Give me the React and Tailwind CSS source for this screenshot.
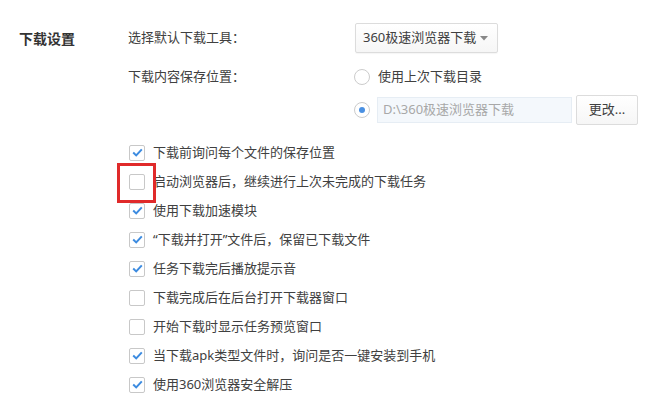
import React from "react";

const items = [
  { t: "下载前询问每个文件的保存位置", c: true },
  { t: "启动浏览器后，继续进行上次未完成的下载任务", c: false, mark: true },
  { t: "使用下载加速模块", c: true },
  { t: "“下载并打开”文件后，保留已下载文件", c: true },
  { t: "任务下载完后播放提示音", c: true },
  { t: "下载完成后在后台打开下载器窗口", c: false },
  { t: "开始下载时显示任务预览窗口", c: false },
  { t: "当下载apk类型文件时，询问是否一键安装到手机", c: true },
  { t: "使用360浏览器安全解压", c: true },
];

function Check({ checked, mark }) {
  return (
    <div className="relative w-[16px] h-[16px] shrink-0">
      <div className="w-[16px] h-[16px] rounded-[2px] border border-[#c8c8c8] bg-white flex items-center justify-center">
        {checked && (
          <svg width="11" height="9" viewBox="0 0 11 9">
            <path d="M1.2 4.6 L4.2 7.4 L9.8 1.4" fill="none" stroke="#3c8be0" strokeWidth="2" />
          </svg>
        )}
      </div>
      {mark && (
        <div className="absolute left-[-12px] top-[-11px] w-[39px] h-[40px] border-[3px] border-[#e02a2a] z-10" />
      )}
    </div>
  );
}

function Radio({ on }) {
  return (
    <div className="w-[16px] h-[16px] rounded-full border border-[#cccccc] bg-white flex items-center justify-center shrink-0">
      {on && <div className="w-[6px] h-[6px] rounded-full bg-[#4a90e2]" />}
    </div>
  );
}

export default function App() {
  return (
    <div
      className="w-[651px] h-[416px] bg-white text-[13px] text-[#404040] overflow-hidden"
      style={{ fontFamily: '"Noto Sans", "Noto Sans CJK SC", sans-serif' }}
    >
      <div className="flex pl-[19px] pt-[23px]">
        <div className="w-[109px] shrink-0 h-[30px] flex items-center text-[14px] font-bold text-[#333]">
          下载设置
        </div>
        <div className="flex flex-col">
          <div className="flex items-center h-[30px]">
            <div className="w-[227px]">选择默认下载工具：</div>
            <div className="w-[143px] h-[30px] border border-[#dcdcdc] rounded-[2px] bg-gradient-to-b from-white to-[#f6f6f6] flex items-center pl-[7px] pr-[9px] justify-between shadow-[0_1px_1px_rgba(0,0,0,0.04)]">
              <span>360极速浏览器下载</span>
              <svg width="8" height="5" viewBox="0 0 8 5">
                <path d="M0 0 H8 L4 4.5 Z" fill="#888" />
              </svg>
            </div>
          </div>
          <div className="flex items-center h-[30px] mt-[9px]">
            <div className="w-[226px]">下载内容保存位置：</div>
            <Radio on={false} />
            <span className="ml-[8px]">使用上次下载目录</span>
          </div>
          <div className="flex items-center h-[30px] mt-[3px]">
            <div className="w-[226px]" />
            <Radio on={true} />
            <div className="ml-[7px] w-[195px] h-[26px] bg-[#f4f8fc] border border-[#e6edf4] flex items-center pl-[5px] text-[#a8a8a8]">
              D:\360极速浏览器下载
            </div>
            <div className="ml-[4px] w-[62px] h-[30px] border border-[#dcdcdc] rounded-[2px] bg-gradient-to-b from-white to-[#f6f6f6] flex items-center justify-center">
              更改...
            </div>
          </div>
          <div className="flex flex-col mt-[13px]">
            {items.map((it, i) => (
              <div key={i} className="flex items-center h-[29px] pl-[1px]">
                <Check checked={it.c} mark={it.mark} />
                <span className="ml-[8px] whitespace-nowrap">{it.t}</span>
              </div>
            ))}
          </div>
        </div>
      </div>
    </div>
  );
}
